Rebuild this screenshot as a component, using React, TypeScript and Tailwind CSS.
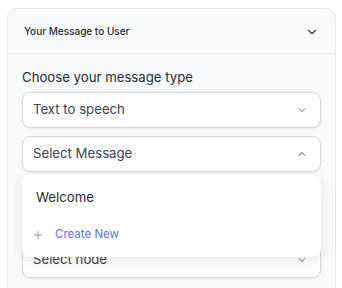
import { ChevronDown, ChevronUp, Plus } from 'lucide-react'

function SelectBox({ label, open }: { label: string; open?: boolean }) {
  return (
    <div className="flex h-9 w-full items-center justify-between rounded-lg border border-[#d4d6dc] bg-white pl-[10px] pr-[12px] shadow-[0_1px_2px_rgba(16,24,40,0.06)]">
      <span className="text-[13.2px] text-[#374151]">{label}</span>
      {open ? (
        <ChevronUp size={12} strokeWidth={2} className="text-[#374151]" />
      ) : (
        <ChevronDown size={12} strokeWidth={2} className="text-[#6b7280]" />
      )}
    </div>
  )
}

export default function App() {
  return (
    <div
      className="h-[288px] w-[342px] overflow-hidden bg-white pl-[7px] pr-[6px] pt-[8px]"
      style={{ fontFamily: 'Inter, "Noto Sans", sans-serif' }}
    >
      <div className="h-[300px] rounded-[10px] border border-[#e5e7eb] bg-[#f9fafb]">
        <div className="flex h-[45px] items-center justify-between border-b border-[#e5e7eb] pl-[16px] pr-[16px] pt-[1px]">
          <span className="text-[10px] font-medium text-[#1f2937]">
            Your Message to User
          </span>
          <ChevronDown size={14} strokeWidth={2} className="text-[#374151]" />
        </div>
        <div className="relative flex flex-col px-[14px] pt-[14px]">
          <div className="mb-[6px] text-[13.2px] leading-[18px] text-[#1f2937]">
            Choose your message type
          </div>
          <SelectBox label="Text to speech" />
          <div className="mt-2">
            <SelectBox label="Select Message" open />
          </div>
          <div className="mt-[70px]">
            <SelectBox label="Select node" />
          </div>
          <div className="absolute left-[14px] right-[14px] top-[121px] h-[82px] rounded-lg bg-white shadow-[0_4px_12px_rgba(16,24,40,0.1)]">
            <div className="pl-[14px] pt-[13px] text-[13.2px] leading-[18px] text-[#1f2937]">
              Welcome
            </div>
            <div className="mt-[20px] flex items-center pl-[10px] text-[11.5px] text-[#6674e0]">
              <Plus size={12} strokeWidth={1.5} />
              <span className="ml-[11px]">Create New</span>
            </div>
          </div>
        </div>
      </div>
    </div>
  )
}
